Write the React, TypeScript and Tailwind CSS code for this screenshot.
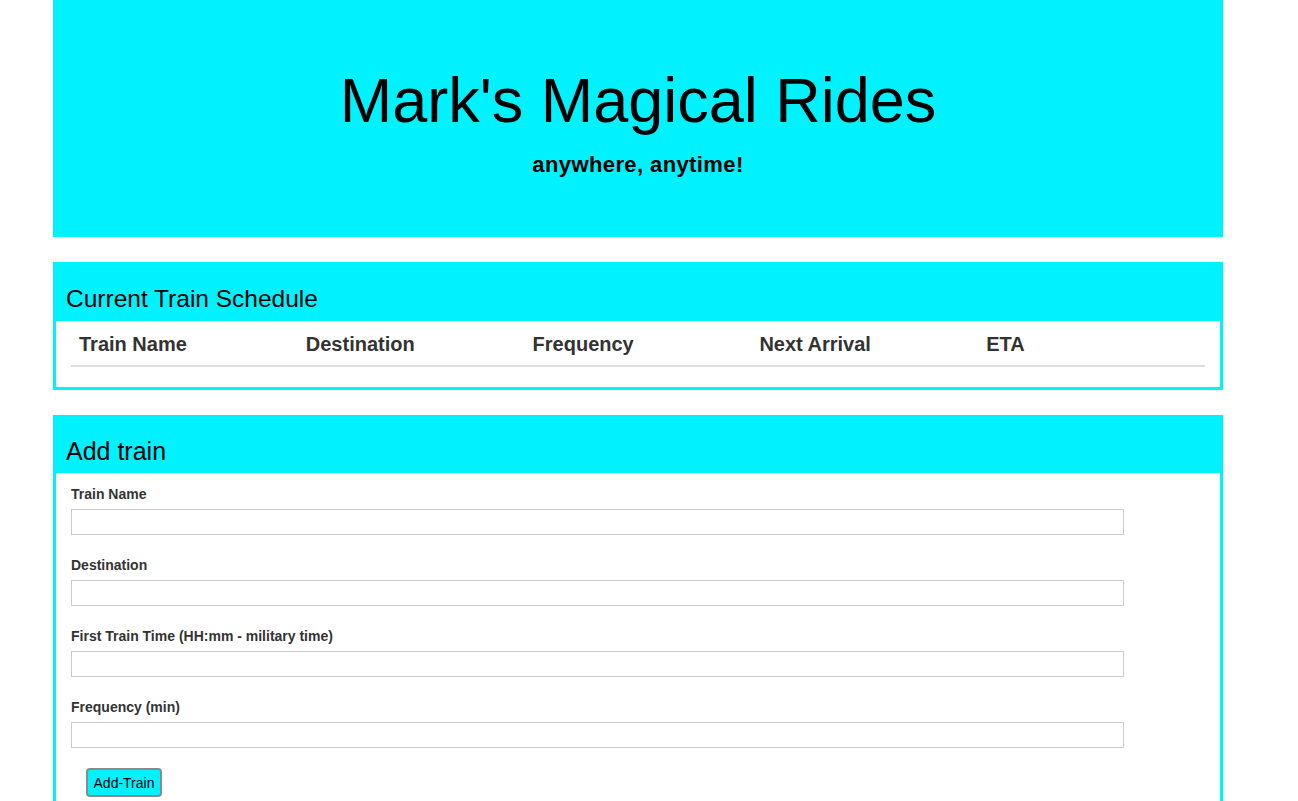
import React from "react";

const cols = ["Train Name", "Destination", "Frequency", "Next Arrival", "ETA"];
const fields = [
  "Train Name",
  "Destination",
  "First Train Time (HH:mm - military time)",
  "Frequency (min)",
];

export default function App() {
  return (
    <div
      className="min-h-screen bg-white text-black"
      style={{ fontFamily: '"Liberation Sans", Arial, Helvetica, sans-serif' }}
    >
      <div className="ml-[53px] w-[1170px] pb-[40px]">
        <header className="h-[237px] bg-[#00f2ff] pt-[66px] text-center">
          <h1 className="text-[63px] leading-[69px] font-normal">Mark's Magical Rides</h1>
          <p className="mt-[14px] text-[22px] leading-[31px] font-semibold tracking-[0.4px]">anywhere, anytime!</p>
        </header>

        <section className="mt-[25px] border-[3px] border-[#00f2ff]">
          <div className="bg-[#00f2ff] pl-[10px] pt-[20px] pb-[8px]">
            <h3 className="text-[24.5px] leading-[28px]">Current Train Schedule</h3>
          </div>
          <div className="bg-white px-[15px] pb-[20px]">
            <table className="w-full table-fixed border-collapse">
              <thead>
                <tr className="border-b-2 border-[#dddddd]">
                  {cols.map((c) => (
                    <th
                      key={c}
                      className="px-[8px] pt-[9px] pb-[7px] text-left text-[20px] leading-[28px] font-bold text-[#333333]"
                    >
                      {c}
                    </th>
                  ))}
                </tr>
              </thead>
            </table>
          </div>
        </section>

        <section className="mt-[25px] border-[3px] border-[#00f2ff]">
          <div className="bg-[#00f2ff] pl-[10px] pt-[19px] pb-[8px]">
            <h3 className="text-[25px] leading-[28px]">Add train</h3>
          </div>
          <form className="bg-white px-[15px] pt-[11px] pb-[20px]" onSubmit={(e) => e.preventDefault()}>
            {fields.map((f) => (
              <div key={f} className="mb-[20px] flex flex-col">
                <label className="mb-[5px] text-[14px] leading-[20px] font-bold text-[#333333]">{f}</label>
                <input
                  type="text"
                  className="h-[26px] w-[1053px] border border-[#cccccc] bg-white px-2 text-[14px] outline-none"
                />
              </div>
            ))}
            <button
              type="submit"
              className="ml-[15px] h-[29px] w-[76px] rounded-[4px] border-2 border-[#8a8a8a] bg-[#00f2ff] text-[14px] leading-[20px] text-black"
            >
              Add-Train
            </button>
          </form>
        </section>
      </div>
    </div>
  );
}
